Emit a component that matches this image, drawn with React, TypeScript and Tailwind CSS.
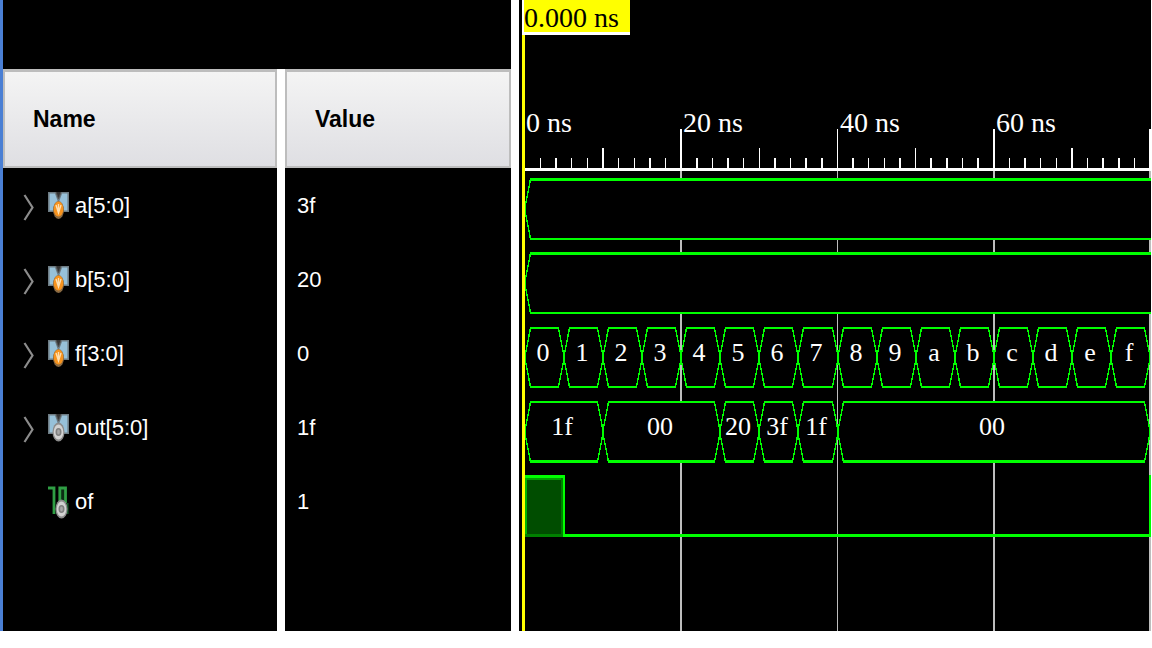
type Kind = "input" | "output" | "wire";

interface Signal {
  name: string;
  value: string;
  kind: Kind;
}

interface Segment {
  from: number;
  to: number;
  label?: string;
}

const signals: Signal[] = [
  { name: "a[5:0]", value: "3f", kind: "input" },
  { name: "b[5:0]", value: "20", kind: "input" },
  { name: "f[3:0]", value: "0", kind: "input" },
  { name: "out[5:0]", value: "1f", kind: "output" },
  { name: "of", value: "1", kind: "wire" },
];

const GREEN = "#00ff00";
const ORIGIN = 5.9;
const PX_PER_NS = 7.815;
const timeToX = (t: number) => ORIGIN + t * PX_PER_NS;

const fSegments: Segment[] = "0123456789abcdef"
  .split("")
  .map((label, i) => ({ from: i * 5, to: i * 5 + 5, label }));

const outSegments: Segment[] = [
  { from: 0, to: 10, label: "1f" },
  { from: 10, to: 25, label: "00" },
  { from: 25, to: 30, label: "20" },
  { from: 30, to: 35, label: "3f" },
  { from: 35, to: 40, label: "1f" },
  { from: 40, to: 80, label: "00" },
];

function Marker({ cx, cy, kind }: { cx: number; cy: number; kind: Kind }) {
  if (kind === "input") {
    return (
      <g>
        <ellipse cx={cx} cy={cy} rx="5.5" ry="9" fill="#8a6a42" />
        <ellipse cx={cx} cy={cy - 1} rx="4.8" ry="7.5" fill="#f7931e" />
        <path d={`M${cx - 2.5} ${cy - 5}L${cx} ${cy + 3}L${cx + 2.5} ${cy - 5}M${cx} ${cy - 6}V${cy + 3}`} stroke="#ffe0b0" strokeWidth="1.4" fill="none" />
      </g>
    );
  }
  return (
    <g>
      <ellipse cx={cx} cy={cy} rx="6" ry="9.5" fill="#8c8c8c" />
      <ellipse cx={cx} cy={cy} rx="4.8" ry="7.6" fill="#d2d2d2" />
      <ellipse cx={cx} cy={cy} rx="2.2" ry="3.2" fill="#a8a8a8" stroke="#808080" strokeWidth="1.6" />
    </g>
  );
}

function SignalIcon({ kind }: { kind: Kind }) {
  if (kind === "wire") {
    return (
      <svg width="22" height="36" viewBox="0 0 22 36" aria-hidden="true">
        <rect x="12" y="4" width="4" height="20" fill="#0b2b13" />
        <path d="M0 5H6M6 3.6V31M11.8 31V5H17.5V20" stroke="#2f9e44" strokeWidth="2.8" fill="none" />
        <path d="M19.5 20V31" stroke="#16592a" strokeWidth="2" />
        <Marker cx={13.5} cy={26} kind={kind} />
      </svg>
    );
  }
  return (
    <svg width="22" height="36" viewBox="0 0 22 36" aria-hidden="true">
      <path d="M0.8 5.8H7.5L10.5 14L13.5 5.8H20.2V24.2H0.8Z" fill="#97c1d9" stroke="#6e7c84" strokeWidth="1.6" />
      <path d="M8 5L10.5 12L13 5" fill="#333333" stroke="#555555" />
      <Marker cx={10.5} cy={23} kind={kind} />
    </svg>
  );
}

function Chevron() {
  return (
    <svg width="12" height="32" viewBox="0 0 12 32" fill="none" aria-hidden="true">
      <path d="M1.5 6L9.5 18.5L1.5 31" stroke="#8c8c8c" strokeWidth="2.2" />
    </svg>
  );
}

function SignalTable() {
  const header =
    "flex h-[99px] items-center border-x-2 border-t-3 border-b-2 border-[#bdbdbd] bg-linear-to-b from-[#f4f4f4] to-[#dfdfe3] pl-7 text-[23px] font-bold text-black";
  return (
    <table className="mt-[69px] w-[508px] table-fixed border-separate border-spacing-0 text-left text-[22px] text-white">
      <thead>
        <tr>
          <th scope="col" className="w-[282px] border-r-8 border-white p-0">
            <div className={header}>Name</div>
          </th>
          <th scope="col" className="p-0">
            <div className={header}>Value</div>
          </th>
        </tr>
      </thead>
      <tbody>
        {signals.map((s) => (
          <tr key={s.name}>
            <td className="h-[74px] border-r-8 border-white p-0">
              <div className="flex items-center pl-5">
                {s.kind === "wire" ? (
                  <span className="w-[25px]" />
                ) : (
                  <button type="button" aria-label={`Expand ${s.name}`} className="w-[25px]">
                    <Chevron />
                  </button>
                )}
                <SignalIcon kind={s.kind} />
                <span className="pl-[5px]">{s.name}</span>
              </div>
            </td>
            <td className="h-[74px] p-0 pl-3">{s.value}</td>
          </tr>
        ))}
        <tr aria-hidden="true">
          <td className="h-[93px] border-r-8 border-white p-0" />
          <td className="p-0" />
        </tr>
      </tbody>
    </table>
  );
}

function Ruler() {
  const ticks = Array.from({ length: 40 }, (_, i) => (i + 1) * 2);
  return (
    <g fill="#ffffff">
      {ticks.map((t) => {
        const left = Math.round(timeToX(t) - 0.8);
        const right = Math.round(timeToX(t) + 0.7);
        const top = t % 20 === 0 ? 129 : t % 10 === 0 ? 148 : 158;
        return (
          <g key={t}>
            <rect x={left} y={top} width={right - left} height={170 - top} />
            {t % 20 === 0 && <rect x={left} y="171" width={right - left} height="460" fill="#bdbdbd" />}
          </g>
        );
      })}
      <rect x="6" y="168" width="626" height="3" />
      {[0, 20, 40, 60].map((t) => (
        <text key={t} x={Math.round(timeToX(t)) + (t === 0 ? 1 : 2)} y="132" fontSize="28">
          {`${t} ns`}
        </text>
      ))}
    </g>
  );
}

interface BusProps {
  top: number;
  segments: Segment[];
  height?: number;
  open?: boolean;
  topWidth?: number;
  bottomWidth?: number;
}

function Bus({ top, segments, height = 62, open = false, topWidth = 2, bottomWidth = 2 }: BusProps) {
  const bottom = top + height;
  const mid = top + height / 2;
  return (
    <g>
      {segments.map(({ from, to, label }) => {
        const l = Math.round(timeToX(from));
        const r = open ? 640 : Math.round(timeToX(to));
        const outline = `M${l + 5.5} ${top + 1}L${l + 0.5} ${mid - 4}V${mid + 4}L${l + 5.5} ${bottom - 1}H${r - 5.5}L${r - 0.5} ${mid + 4}V${mid - 4}L${r - 5.5} ${top + 1}Z`;
        return (
          <g key={from}>
            <path d={outline} fill="#000000" stroke={GREEN} strokeWidth="1.4" />
            <rect x={l + 5} y={top} width={r - l - 11} height={topWidth} fill={GREEN} />
            <rect x={l + 5} y={bottom - bottomWidth} width={r - l - 11} height={bottomWidth} fill={GREEN} />
            {label && (
              <text x={Math.round((l + r) / 2) - 2} y={top + 34} fill="#ffffff" fontSize="26" textAnchor="middle">
                {label}
              </text>
            )}
          </g>
        );
      })}
    </g>
  );
}

function OverflowBit() {
  return (
    <g>
      <rect x="6" y="475" width="38" height="62" fill="#008000" />
      <rect x="6" y="478" width="2" height="56" fill="#00b300" />
      <rect x="8" y="478" width="34" height="2" fill="#00a000" />
      <rect x="8" y="480" width="34" height="54" fill="#004d00" />
      <rect x="6" y="475" width="40" height="3" fill={GREEN} />
      <rect x="44" y="475" width="2" height="62" fill={GREEN} />
      <rect x="44" y="534" width="588" height="3" fill={GREEN} />
      <rect x="630" y="475" width="2" height="62" fill={GREEN} />
    </g>
  );
}

function WavePane() {
  return (
    <section
      aria-label="Waveform"
      className="relative min-w-0 flex-1 overflow-hidden border-r border-white font-['Liberation_Serif',serif]"
    >
      <svg width="632" height="631" viewBox="0 0 632 631" shapeRendering="crispEdges" className="block max-w-none">
        <Ruler />
        <Bus top={178} segments={[{ from: 0, to: 80 }]} open topWidth={3} />
        <Bus top={252} segments={[{ from: 0, to: 80 }]} open topWidth={3} />
        <Bus top={327} height={61} segments={fSegments} />
        <Bus top={401} segments={outSegments} bottomWidth={3} />
        <OverflowBit />
        <rect x="3" y="35" width="3" height="596" fill="#ffff00" />
      </svg>
      <div className="absolute top-0 left-[3px] h-[35px] w-[108px] border-b-3 border-l-2 border-white bg-[#ffff00] text-[28px] leading-9 whitespace-nowrap text-black">
        0.000 ns
      </div>
    </section>
  );
}

export default function App() {
  return (
    <main className="min-h-screen bg-white font-['Liberation_Sans',sans-serif]">
      <div className="flex bg-black">
        <div className="flex shrink-0 border-r-8 border-l-3 border-r-white border-l-[#4a7fd4]">
          <SignalTable />
        </div>
        <WavePane />
      </div>
    </main>
  );
}
